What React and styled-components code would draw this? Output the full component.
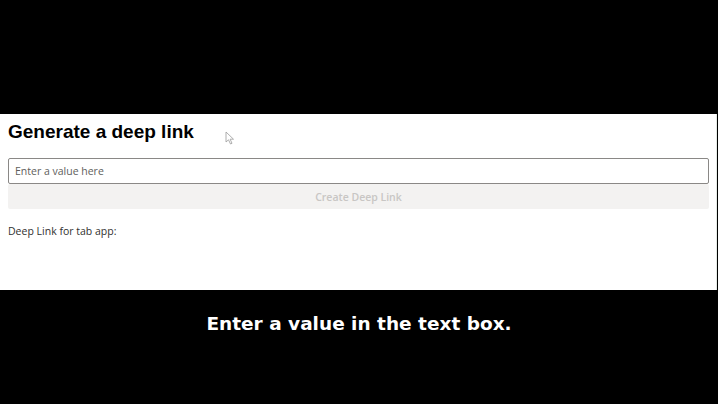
import React from 'react'
import styled, { createGlobalStyle } from 'styled-components'

const Global = createGlobalStyle`
  html, body { margin: 0; padding: 0; background: #000; }
  body { width: 718px; height: 404px; overflow: hidden; }
`

const Frame = styled.div`
  width: 718px; height: 404px;
  background: #000;
  display: flex;
  flex-direction: column;
`

const TopBand = styled.div`
  height: 114px;
  flex-shrink: 0;
`

const Panel = styled.div`
  position: relative;
  height: 176px;
  width: 717px;
  background: #fff;
  border-right: 1px solid #e6ebe6;
  box-sizing: border-box;
  padding: 6px 8px 0 8px;
  display: flex;
  flex-direction: column;
`

const Title = styled.h2`
  margin: 0;
  font-family: "Liberation Sans", Arial, sans-serif;
  font-weight: 700;
  font-size: 19px;
  line-height: 23px;
  color: #000;
`

const Input = styled.input`
  margin-top: 15px;
  width: 701px;
  height: 26px;
  box-sizing: border-box;
  border: 1px solid #8a8886;
  border-radius: 2px;
  padding: 0 6px;
  font-family: "Open Sans", "Noto Sans", sans-serif;
  font-size: 10.5px;
  color: #323130;
  outline: none;
  &::placeholder { color: #605e5c; }
`

const Button = styled.button`
  width: 701px;
  height: 25px;
  border: none;
  border-radius: 2px;
  background: #f3f2f1;
  color: #c8c6c4;
  font-family: "Open Sans", "Noto Sans", sans-serif;
  font-size: 10.5px;
  font-weight: 600;
  padding: 0;
`

const Label = styled.p`
  margin: 15px 0 0 0;
  font-family: "Open Sans", "Noto Sans", sans-serif;
  font-size: 10.5px;
  color: #323130;
`

const Pointer = styled.svg`
  position: absolute;
  left: 225px;
  top: 17px;
`

const Caption = styled.div`
  flex: 1;
  display: flex;
  justify-content: center;
  padding-top: 23px;
  font-family: "DejaVu Sans", "Noto Sans", sans-serif;
  font-weight: 700;
  font-size: 18.5px;
  color: #fff;
`

export default function App() {
  return (
    <>
      <Global />
      <Frame>
        <TopBand />
        <Panel>
          <Title>Generate a deep link</Title>
          <Pointer width="10" height="14" viewBox="0 0 10 14">
            <path d="M1 1 L1 11 L3.5 8.8 L5.5 13 L7 12.3 L5.1 8.2 L8.5 8.2 Z" fill="#fff" stroke="#9a9a9a" strokeWidth="0.8" strokeLinejoin="round" />
          </Pointer>
          <Input placeholder="Enter a value here" />
          <Button disabled>Create Deep Link</Button>
          <Label>Deep Link for tab app:</Label>
        </Panel>
        <Caption>Enter a value in the text box.</Caption>
      </Frame>
    </>
  )
}
